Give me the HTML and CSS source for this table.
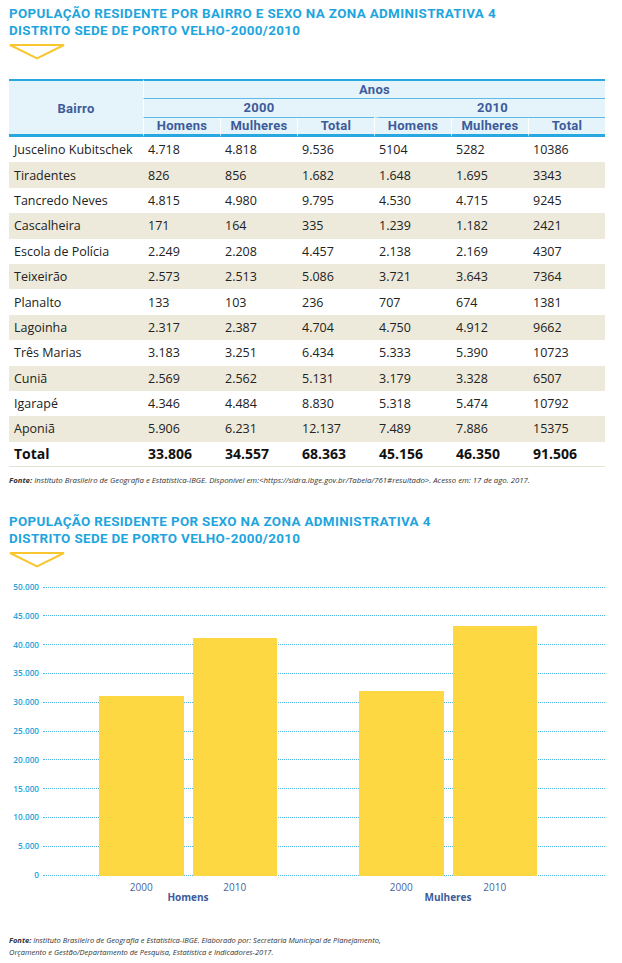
FILE: index.html
```html
<!DOCTYPE html>
<html lang="pt-BR">
<head>
<meta charset="utf-8">
<title>População residente - Zona Administrativa 4</title>
<link rel="stylesheet" href="styles.css">
</head>
<body>
<div class="page">
  <section class="block">
    <h2 class="title">POPULAÇÃO RESIDENTE POR BAIRRO E SEXO NA ZONA ADMINISTRATIVA 4<br>DISTRITO SEDE DE PORTO VELHO-2000/2010</h2>
    <svg class="marker" width="56" height="16" viewBox="0 0 56 16" aria-hidden="true"><path d="M1 1 H55 L28 14.5 Z" fill="none" stroke="#f8c630" stroke-width="2"/></svg>

    <table class="data">
      <colgroup>
        <col class="c-name"><col class="c-num"><col class="c-num"><col class="c-num"><col class="c-num"><col class="c-num"><col class="c-num">
      </colgroup>
      <thead>
        <tr class="h1">
          <th rowspan="3" class="bairro">Bairro</th>
          <th colspan="6" class="anos">Anos</th>
        </tr>
        <tr class="h2">
          <th colspan="3" class="y2000">2000</th>
          <th colspan="3" class="y2010">2010</th>
        </tr>
        <tr class="h3">
          <th>Homens</th><th>Mulheres</th><th>Total</th>
          <th>Homens</th><th>Mulheres</th><th>Total</th>
        </tr>
      </thead>
      <tbody>
        <tr><td>Juscelino Kubitschek</td><td>4.718</td><td>4.818</td><td>9.536</td><td>5104</td><td>5282</td><td>10386</td></tr>
        <tr><td>Tiradentes</td><td>826</td><td>856</td><td>1.682</td><td>1.648</td><td>1.695</td><td>3343</td></tr>
        <tr><td>Tancredo Neves</td><td>4.815</td><td>4.980</td><td>9.795</td><td>4.530</td><td>4.715</td><td>9245</td></tr>
        <tr><td>Cascalheira</td><td>171</td><td>164</td><td>335</td><td>1.239</td><td>1.182</td><td>2421</td></tr>
        <tr><td>Escola de Polícia</td><td>2.249</td><td>2.208</td><td>4.457</td><td>2.138</td><td>2.169</td><td>4307</td></tr>
        <tr><td>Teixeirão</td><td>2.573</td><td>2.513</td><td>5.086</td><td>3.721</td><td>3.643</td><td>7364</td></tr>
        <tr><td>Planalto</td><td>133</td><td>103</td><td>236</td><td>707</td><td>674</td><td>1381</td></tr>
        <tr><td>Lagoinha</td><td>2.317</td><td>2.387</td><td>4.704</td><td>4.750</td><td>4.912</td><td>9662</td></tr>
        <tr><td>Três Marias</td><td>3.183</td><td>3.251</td><td>6.434</td><td>5.333</td><td>5.390</td><td>10723</td></tr>
        <tr><td>Cuniã</td><td>2.569</td><td>2.562</td><td>5.131</td><td>3.179</td><td>3.328</td><td>6507</td></tr>
        <tr><td>Igarapé</td><td>4.346</td><td>4.484</td><td>8.830</td><td>5.318</td><td>5.474</td><td>10792</td></tr>
        <tr><td>Aponiã</td><td>5.906</td><td>6.231</td><td>12.137</td><td>7.489</td><td>7.886</td><td>15375</td></tr>
        <tr class="total"><td>Total</td><td>33.806</td><td>34.557</td><td>68.363</td><td>45.156</td><td>46.350</td><td>91.506</td></tr>
      </tbody>
    </table>
    <p class="source source-1"><b>Fonte:</b> Instituto Brasileiro de Geografia e Estatística-IBGE. Disponível em:&lt;https://sidra.ibge.gov.br/Tabela/761#resultado&gt;. Acesso em: 17 de ago. 2017.</p>
  </section>

  <section class="block block-chart">
    <h2 class="title">POPULAÇÃO RESIDENTE POR SEXO NA ZONA ADMINISTRATIVA 4<br>DISTRITO SEDE DE PORTO VELHO-2000/2010</h2>
    <svg class="marker" width="56" height="16" viewBox="0 0 56 16" aria-hidden="true"><path d="M1 1 H55 L28 14.5 Z" fill="none" stroke="#f8c630" stroke-width="2"/></svg>

    <div class="chart">
      <div class="grid">
        <div class="grow"><span class="ylab">50.000</span><span class="gline"></span></div>
        <div class="grow"><span class="ylab">45.000</span><span class="gline"></span></div>
        <div class="grow"><span class="ylab">40.000</span><span class="gline"></span></div>
        <div class="grow"><span class="ylab">35.000</span><span class="gline"></span></div>
        <div class="grow"><span class="ylab">30.000</span><span class="gline"></span></div>
        <div class="grow"><span class="ylab">25.000</span><span class="gline"></span></div>
        <div class="grow"><span class="ylab">20.000</span><span class="gline"></span></div>
        <div class="grow"><span class="ylab">15.000</span><span class="gline"></span></div>
        <div class="grow"><span class="ylab">10.000</span><span class="gline"></span></div>
        <div class="grow"><span class="ylab">5.000</span><span class="gline"></span></div>
        <div class="grow"><span class="ylab">0</span><span class="gline"></span></div>

        <div class="bars">
          <div class="bgroup">
            <div class="bar" style="height:180px"></div>
            <div class="bar" style="height:238px"></div>
          </div>
          <div class="bgroup">
            <div class="bar" style="height:185px"></div>
            <div class="bar" style="height:250px"></div>
          </div>
        </div>
      </div>

      <div class="xaxis">
        <div class="xgroup">
          <div class="years"><span>2000</span><span>2010</span></div>
          <div class="xname">Homens</div>
        </div>
        <div class="xgroup">
          <div class="years"><span>2000</span><span>2010</span></div>
          <div class="xname">Mulheres</div>
        </div>
      </div>
    </div>

    <p class="source source-2"><b>Fonte:</b> Instituto Brasileiro de Geografia e Estatística-IBGE. Elaborado por: Secretaria Municipal de Planejamento,<br>Orçamento e Gestão/Departamento de Pesquisa, Estatística e Indicadores-2017.</p>
  </section>
</div>
</body>
</html>
```

FILE: styles.css
```css
* { box-sizing: border-box; }

html, body {
  margin: 0;
  padding: 0;
  background: #ffffff;
}

body {
  font-family: "Open Sans", "Noto Sans", sans-serif;
  color: #222222;
}

.page {
  width: 622px;
  padding: 5px 17px 0 9px;
}

.block {
  display: flex;
  flex-direction: column;
  align-items: flex-start;
}

.title {
  margin: 0;
  font-family: Roboto, "Liberation Sans", sans-serif;
  font-weight: 700;
  font-size: 13.4px;
  line-height: 17px;
  color: #1ea5de;
  letter-spacing: 0.36px;
}

.marker {
  display: block;
  margin-top: 5px;
}

/* ---------- table ---------- */
.data {
  margin-top: 19px;
  width: 596px;
  border-collapse: separate;
  border-spacing: 0;
  table-layout: fixed;
}

.c-name { width: 134px; }
.c-num { width: 77px; }

.data thead th {
  background: #e5f3fb;
  font-family: Roboto, "Liberation Sans", sans-serif;
  font-weight: 700;
  font-size: 13px;
  letter-spacing: 0.3px;
  color: #3d5b9a;
  text-align: center;
  padding: 0;
  border-left: 1px solid #ffffff;
}

.data thead th.bairro { border-left: 0; }

.data thead tr.h1 th {
  border-top: 2px solid #27a8e0;
}

.data thead tr.h1 th.anos {
  height: 19px;
  border-bottom: 1px solid #5db9e6;
  line-height: 17px;
}

.data thead tr.h2 th {
  height: 19px;
  line-height: 18px;
  border-bottom: 1px solid #5db9e6;
}

.data thead tr.h2 th.y2010 { border-left: 6px solid #e5f3fb; }

.data thead tr.h3 th {
  height: 19px;
  line-height: 16px;
  border-bottom: 3px solid #27a8e0;
}

.data thead th.bairro {
  border-bottom: 3px solid #27a8e0;
  padding-top: 2px;
}

.data tbody td {
  height: 25.4px;
  padding: 0 0 0 5px;
  font-size: 12.5px;
  color: #222222;
  white-space: nowrap;
  vertical-align: middle;
}

.data tbody tr:nth-child(even) td {
  background: #edeadb;
}

.data tbody tr.total td {
  font-weight: 700;
  font-size: 14px;
  color: #111111;
  border-bottom: 1px solid #e6e3d3;
}

/* ---------- sources ---------- */
.source {
  margin: 0;
  font-family: "Open Sans", "Noto Sans", sans-serif;
  font-style: italic;
  line-height: 12px;
  color: #333333;
}

.source b { font-weight: 700; }

.source-1 { margin-top: 7px; font-size: 7.8px; }

.block-chart { margin-top: 27px; }

/* ---------- chart ---------- */
.chart {
  margin-top: 19px;
  width: 596px;
}

.grid {
  position: relative;
  height: 288px;
  display: flex;
  flex-direction: column;
  justify-content: space-between;
}

.grow {
  height: 0;
  display: flex;
  align-items: center;
}

.ylab {
  width: 30px;
  margin-right: 4px;
  text-align: right;
  font-family: "Open Sans", "Noto Sans", sans-serif;
  font-size: 8.2px;
  font-weight: 600;
  line-height: 10px;
  color: #22a3dc;
}

.gline {
  flex: 1;
  height: 0;
  border-top: 1.5px dotted #4cb3e2;
}

.bars {
  position: absolute;
  left: 90px;
  bottom: -1px;
  display: flex;
  align-items: flex-end;
  gap: 82px;
}

.bgroup {
  width: 178px;
  display: flex;
  align-items: flex-end;
  gap: 9px;
}

.bar {
  flex: 1;
  background: #fdd843;
}

.xaxis {
  margin-top: 6px;
  margin-left: 90px;
  display: flex;
  gap: 82px;
}

.xgroup {
  width: 178px;
  display: flex;
  flex-direction: column;
  align-items: center;
}

.years {
  width: 100%;
  display: flex;
  gap: 9px;
}

.years span {
  flex: 1;
  text-align: center;
  font-family: "Open Sans", "Noto Sans", sans-serif;
  font-size: 10px;
  line-height: 12px;
  color: #4a64a0;
}

.xname {
  font-family: "Open Sans", "Noto Sans", sans-serif;
  font-weight: 700;
  font-size: 10px;
  line-height: 9px;
  color: #3d5b9a;
}

.source-2 { margin-top: 32px; font-size: 7.5px; }
```
